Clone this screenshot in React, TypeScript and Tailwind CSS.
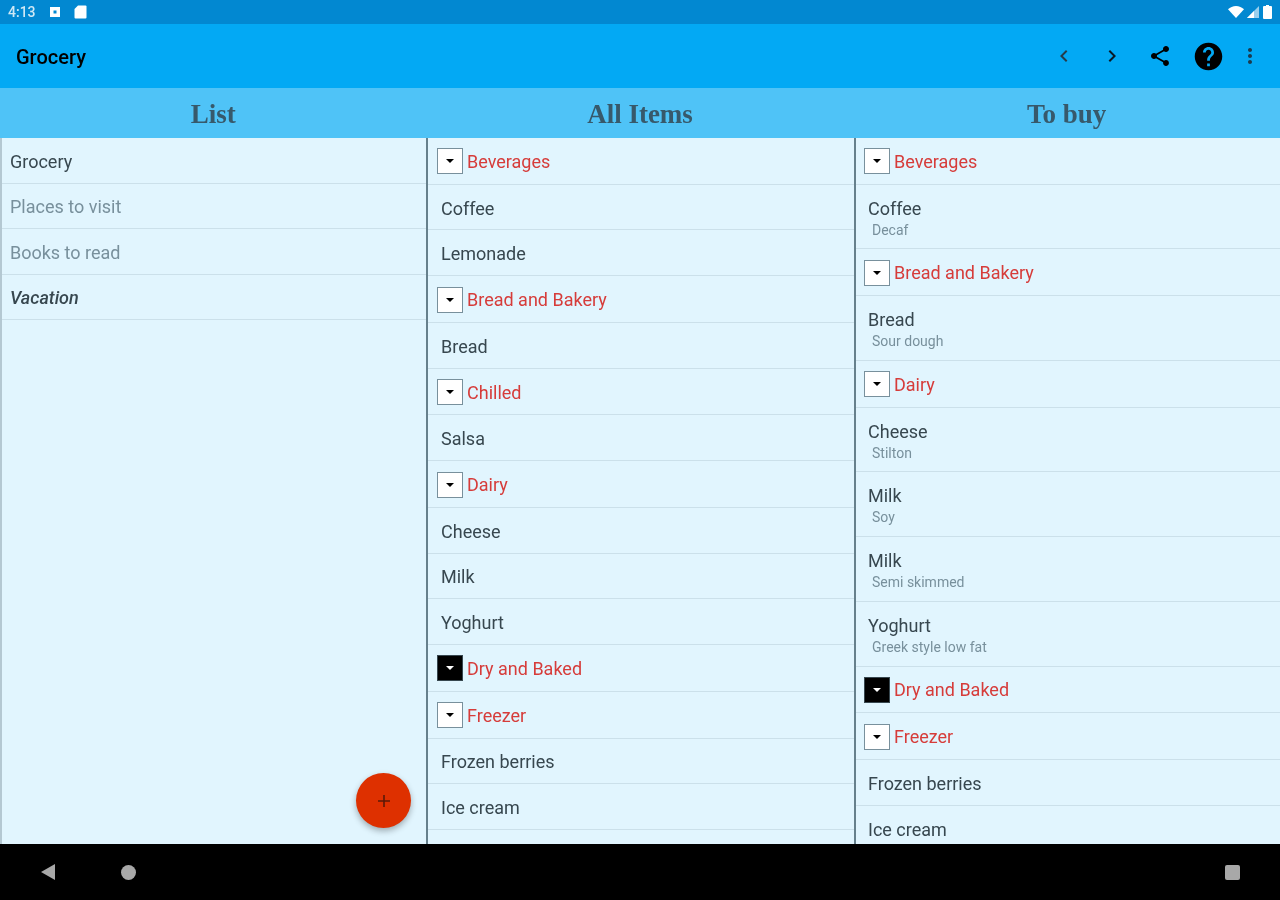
import React from 'react';

type Row = { kind: 'section' | 'item'; label: string; sub?: string; dark?: boolean };

const listNames = [
  { label: 'Grocery', cls: 'text-[#37474f]' },
  { label: 'Places to visit', cls: 'text-[#78909c]' },
  { label: 'Books to read', cls: 'text-[#78909c]' },
  { label: 'Vacation', cls: 'text-[#37474f] italic font-medium' },
];

const allItems: Row[] = [
  { kind: 'section', label: 'Beverages' },
  { kind: 'item', label: 'Coffee' },
  { kind: 'item', label: 'Lemonade' },
  { kind: 'section', label: 'Bread and Bakery' },
  { kind: 'item', label: 'Bread' },
  { kind: 'section', label: 'Chilled' },
  { kind: 'item', label: 'Salsa' },
  { kind: 'section', label: 'Dairy' },
  { kind: 'item', label: 'Cheese' },
  { kind: 'item', label: 'Milk' },
  { kind: 'item', label: 'Yoghurt' },
  { kind: 'section', label: 'Dry and Baked', dark: true },
  { kind: 'section', label: 'Freezer' },
  { kind: 'item', label: 'Frozen berries' },
  { kind: 'item', label: 'Ice cream' },
  { kind: 'item', label: '' },
];

const toBuy: Row[] = [
  { kind: 'section', label: 'Beverages' },
  { kind: 'item', label: 'Coffee', sub: 'Decaf' },
  { kind: 'section', label: 'Bread and Bakery' },
  { kind: 'item', label: 'Bread', sub: 'Sour dough' },
  { kind: 'section', label: 'Dairy' },
  { kind: 'item', label: 'Cheese', sub: 'Stilton' },
  { kind: 'item', label: 'Milk', sub: 'Soy' },
  { kind: 'item', label: 'Milk', sub: 'Semi skimmed' },
  { kind: 'item', label: 'Yoghurt', sub: 'Greek style low fat' },
  { kind: 'section', label: 'Dry and Baked', dark: true },
  { kind: 'section', label: 'Freezer' },
  { kind: 'item', label: 'Frozen berries' },
  { kind: 'item', label: 'Ice cream' },
];

function Icon({ d, size = 24, fill = '#000', className = '' }: { d: string; size?: number; fill?: string; className?: string }) {
  return (
    <svg width={size} height={size} viewBox="0 0 24 24" className={className}>
      <path d={d} fill={fill} />
    </svg>
  );
}

function Arrow({ dark }: { dark?: boolean }) {
  return (
    <div className={dark ? 'w-[26px] h-[26px] shrink-0 flex items-center justify-center bg-black border border-[#37474f]' : 'w-[26px] h-[26px] shrink-0 flex items-center justify-center bg-white border border-[#78909c]'}>
      <svg width="10" height="6" viewBox="0 0 10 6">
        <path d="M1 1h8L5 5z" fill={dark ? '#fff' : '#000'} />
      </svg>
    </div>
  );
}

// the middle column sits one pixel further in than the right one
function ListRow({ row, inset }: { row: Row; inset?: boolean }) {
  if (row.kind === 'section') {
    return (
      <div className={(inset ? 'pl-[9px]' : 'pl-[8px]') + ' h-[46.8px] shrink-0 flex items-center gap-[4px] pt-[1px] border-b border-[#cbe0ea]'}>
        <Arrow dark={row.dark} />
        <span className="text-[18px] text-[#d63c3a]">{row.label}</span>
      </div>
    );
  }
  if (row.sub) {
    return (
      <div className="h-[64.7px] shrink-0 flex flex-col pl-[12px] pt-[12px] border-b border-[#cbe0ea]">
        <span className="text-[18px] leading-[24px] text-[#37474f]">{row.label}</span>
        <span className="text-[14px] leading-[18px] pl-[4px] text-[#78909c]">{row.sub}</span>
      </div>
    );
  }
  return (
    <div className={(inset ? 'pl-[13px]' : 'pl-[12px]') + ' h-[45.7px] shrink-0 flex items-center pt-[2px] border-b border-[#cbe0ea]'}>
      <span className="text-[18px] text-[#37474f]">{row.label}</span>
    </div>
  );
}

function Header({ title }: { title: string }) {
  return (
    <div className="flex-1 flex items-center justify-center pt-[2px]">
      <span className="text-[27px] font-semibold text-[#37596b] font-['Liberation_Serif',serif]">{title}</span>
    </div>
  );
}

export default function App() {
  return (
    <div className="w-[1280px] h-[900px] flex flex-col overflow-hidden font-['Roboto',sans-serif] bg-[#e1f5fe] blur-[0.6px]">
      {/* status bar */}
      <div className="h-[24px] shrink-0 bg-[#0288d1] flex items-center justify-between pl-[8px] pr-[8px]">
        <div className="flex items-center gap-[13px]">
          <span className="text-[14px] font-medium text-[#cfe8f5]">4:13</span>
          <svg width="12" height="12" viewBox="0 0 12 12">
            <path d="M1 1h10v10H1zM4.5 4.5v3h3v-3z" fill="#fff" fillRule="evenodd" />
          </svg>
          <svg width="13" height="14" viewBox="0 0 13 14">
            <path d="M4 0.5h7.5a1 1 0 0 1 1 1v11a1 1 0 0 1-1 1h-10a1 1 0 0 1-1-1V4z" fill="#fff" />
          </svg>
        </div>
        <div className="flex items-center gap-[3px]">
          <svg width="16" height="12" viewBox="0 0 16 12">
            <path d="M0 3.2C2 1.3 5 0 8 0s6 1.3 8 3.2L8 12z" fill="#fff" />
          </svg>
          <svg width="12" height="12" viewBox="0 0 12 12">
            <path d="M12 0v12H0z" fill="#fff" fillOpacity="0.6" />
            <path d="M7 5v7H0z" fill="#fff" />
          </svg>
          <svg width="9" height="14" viewBox="0 0 9 14" className="ml-[1px]">
            <path d="M3 0h3v1h2a1 1 0 0 1 1 1v11a1 1 0 0 1-1 1H1a1 1 0 0 1-1-1V2a1 1 0 0 1 1-1h2z" fill="#fff" />
          </svg>
        </div>
      </div>

      {/* app bar */}
      <div className="h-[64px] shrink-0 bg-[#03a9f4] flex items-center pl-[16px]">
        <span className="text-[20px] font-medium text-black pt-[2px]">Grocery</span>
        <div className="ml-auto flex items-center">
          <div className="w-[48px] flex justify-center"><Icon d="M15.41 7.41 14 6l-6 6 6 6 1.41-1.41L10.83 12z" fill="#263c4a" /></div>
          <div className="w-[48px] flex justify-center"><Icon d="M10 6 8.59 7.41 13.17 12l-4.58 4.59L10 18l6-6z" fill="#0a1a26" /></div>
          <div className="w-[48px] flex justify-center"><Icon d="M18 16.08c-.76 0-1.44.3-1.96.77L8.91 12.7c.05-.23.09-.46.09-.7s-.04-.47-.09-.7l7.05-4.11c.54.5 1.25.81 2.04.81 1.66 0 3-1.34 3-3s-1.34-3-3-3-3 1.34-3 3c0 .24.04.47.09.7L8.04 9.81C7.5 9.31 6.79 9 6 9c-1.66 0-3 1.34-3 3s1.34 3 3 3c.79 0 1.5-.31 2.04-.81l7.12 4.16c-.05.21-.08.43-.08.65 0 1.61 1.31 2.92 2.92 2.92 1.61 0 2.92-1.31 2.92-2.92s-1.31-2.92-2.92-2.92z" /></div>
          <div className="w-[48px] flex justify-center"><Icon size={33} d="M12 2C6.48 2 2 6.48 2 12s4.48 10 10 10 10-4.48 10-10S17.52 2 12 2zm1 17h-2v-2h2v2zm2.07-7.75l-.9.92C13.45 12.9 13 13.5 13 15h-2v-.5c0-1.1.45-2.1 1.17-2.83l1.24-1.26c.37-.36.59-.86.59-1.41 0-1.1-.9-2-2-2s-2 .9-2 2H8c0-2.21 1.79-4 4-4s4 1.79 4 4c0 .88-.36 1.68-.93 2.25z" /></div>
          <div className="w-[36px] mr-[12px] flex justify-center"><Icon d="M12 8c1.1 0 2-.9 2-2s-.9-2-2-2-2 .9-2 2 .9 2 2 2zm0 2c-1.1 0-2 .9-2 2s.9 2 2 2 2-.9 2-2-.9-2-2-2zm0 6c-1.1 0-2 .9-2 2s.9 2 2 2 2-.9 2-2-.9-2-2-2z" fill="#1c3a4d" /></div>
        </div>
      </div>

      {/* column titles */}
      <div className="h-[50px] shrink-0 bg-[#4fc3f7] flex">
        <Header title="List" />
        <Header title="All Items" />
        <Header title="To buy" />
      </div>

      {/* columns */}
      <div className="flex-1 min-h-0 flex relative">
        <div className="w-[428px] shrink-0 border-l-2 border-r-2 border-l-[#b4c8d2] border-r-[#66808c] flex flex-col">
          {listNames.map((n) => (
            <div key={n.label} className="h-[45.5px] shrink-0 flex items-center pl-[8px] pt-[2px] border-b border-[#cbe0ea]">
              <span className={'text-[18px] ' + n.cls}>{n.label}</span>
            </div>
          ))}
        </div>
        <div className="w-[428px] shrink-0 border-r-2 border-[#66808c] flex flex-col overflow-hidden">
          {allItems.map((r, i) => <ListRow key={i} row={r} inset />)}
        </div>
        <div className="flex-1 flex flex-col overflow-hidden">
          {toBuy.map((r, i) => <ListRow key={i} row={r} />)}
        </div>
        <button className="absolute left-[356px] top-[635px] w-[55px] h-[55px] rounded-full bg-[#de3000] shadow-[0_3px_6px_rgba(0,0,0,0.3)] flex items-center justify-center">
          <svg width="14" height="14" viewBox="0 0 14 14">
            <path d="M6.2 1h1.6v5.2H13v1.6H7.8V13H6.2V7.8H1V6.2h5.2z" fill="#5a1a08" />
          </svg>
        </button>
      </div>

      {/* nav bar */}
      <div className="h-[56px] shrink-0 bg-black relative">
        <svg width="16" height="18" viewBox="0 0 16 18" className="absolute left-[40px] top-[19px]">
          <path d="M15 1v16L1 9z" fill="#a8a8a8" />
        </svg>
        <div className="absolute left-[121px] top-[21px] w-[15px] h-[15px] rounded-full bg-[#a8a8a8]" />
        <div className="absolute left-[1225px] top-[21px] w-[15px] h-[15px] rounded-[2px] bg-[#a8a8a8]" />
      </div>
    </div>
  );
}
